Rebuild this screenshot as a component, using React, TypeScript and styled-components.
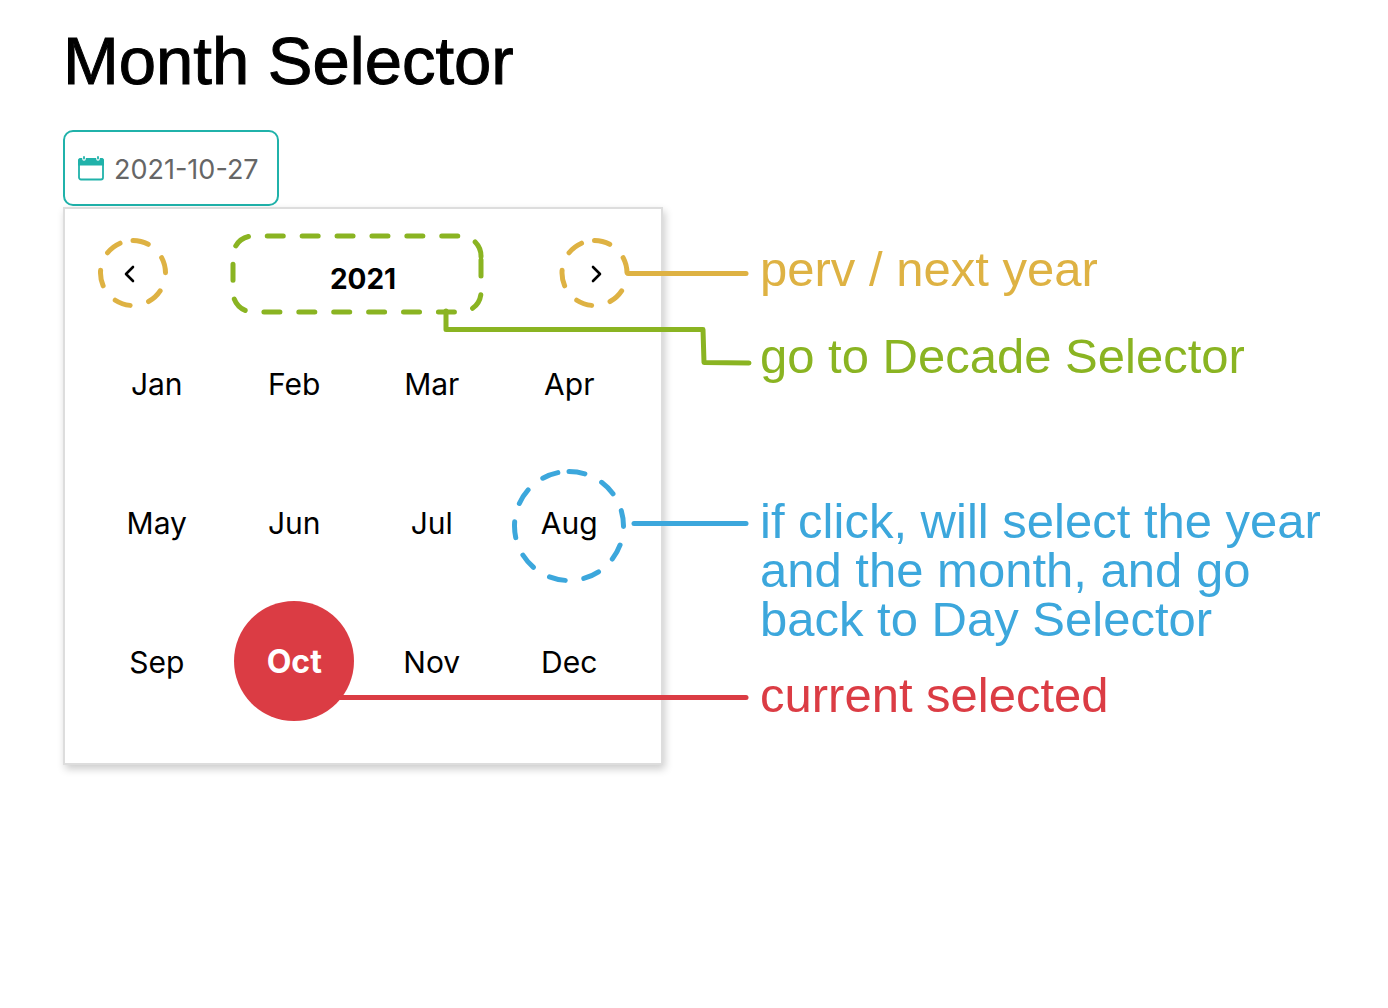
import React, { useState } from "react";
import styled, { createGlobalStyle } from "styled-components";

const colors = {
  teal: "#20b2aa",
  yellow: "#deb243",
  green: "#8ab422",
  blue: "#3ca7dc",
  red: "#db3c44",
};

const GlobalStyle = createGlobalStyle`
  *, *::before, *::after { box-sizing: border-box; }
  body { margin: 0; background: #fff; color: #000; }
  button, input { font: inherit; color: inherit; }
`;

const Page = styled.main`
  padding: 28px 62px 40px 63px;
  font-family: "Liberation Sans", Arial, sans-serif;
`;

const Title = styled.h1`
  margin: 0 0 36px;
  font-size: 67px;
  line-height: 66px;
  font-weight: 400;
  -webkit-text-stroke: 1px currentColor;
`;

const DateField = styled.label`
  display: flex;
  align-items: center;
  gap: 10px;
  width: 216px;
  height: 76px;
  margin-bottom: 1px;
  padding: 0 13px;
  border: 2px solid ${colors.teal};
  border-radius: 10px;
  color: ${colors.teal};
`;

const DateInput = styled.input`
  flex: 1;
  min-width: 0;
  padding: 4px 0 0;
  border: 0;
  outline: 0;
  background: transparent;
  color: #666;
  font-family: Inter, sans-serif;
  font-size: 27px;
  line-height: 32px;
`;

const Stage = styled.div`
  position: relative;
  display: flex;
  align-items: flex-start;
  gap: 97px;
`;

const Picker = styled.section`
  flex: 0 0 600px;
  padding: 0 23px 33px;
  border: 2px solid #ddd;
  background: #fff;
  box-shadow: 2px 4px 8px rgba(0, 0, 0, 0.2);
  font-family: Inter, sans-serif;
`;

const PickerHeader = styled.header`
  display: flex;
  align-items: center;
  height: 104px;
  padding-top: 26px;
`;

const PlainButton = styled.button`
  display: flex;
  align-items: center;
  justify-content: center;
  padding: 0;
  border: 0;
  background: transparent;
  cursor: pointer;
`;

const ArrowButton = styled(PlainButton)`
  width: 84px;
  height: 68px;
`;

const YearButton = styled(PlainButton)`
  flex: 1;
  padding-top: 10px;
  font-size: 28px;
  line-height: 36px;
  font-weight: 700;
`;

const MonthGrid = styled.div`
  display: grid;
  grid-template-columns: repeat(4, 1fr);
  grid-auto-rows: 139px;
  place-items: center;
`;

const MonthButton = styled(PlainButton)<{ $selected: boolean }>`
  width: 120px;
  height: 120px;
  padding-top: 2px;
  border-radius: 50%;
  background: ${(p) => (p.$selected ? colors.red : "transparent")};
  color: ${(p) => (p.$selected ? "#fff" : "#000")};
  font-size: ${(p) => (p.$selected ? 32 : 30)}px;
  line-height: 40px;
  font-weight: ${(p) => (p.$selected ? 700 : 400)};
`;

const Notes = styled.div`
  flex: 0 1 580px;
  min-width: 0;
  padding-top: 38px;
  font-size: 49px;
  line-height: 49px;
`;

const Note = styled.p<{ $color: string; $space?: number }>`
  margin: 0 0 ${(p) => p.$space ?? 0}px;
  color: ${(p) => p.$color};
`;

const Markup = styled.svg`
  position: absolute;
  top: 0;
  left: 0;
  pointer-events: none;
`;

const CalendarIcon = () => (
  <svg width="26" height="26" viewBox="0 0 26 26" fill="none" aria-hidden="true">
    <rect x="1" y="4" width="24" height="20.5" rx="2" stroke="currentColor" strokeWidth="1.8" />
    <path d="M0 10.500V5.500Q0 3 2.500 3H23.500Q26 3 26 5.500V10.500Z" fill="currentColor" />
    <path d="M6 2V4M20 2V4" stroke="#fff" strokeWidth="3.600" strokeLinecap="round" />
    <path d="M6 2V3.500M20 2V3.500" stroke="currentColor" strokeWidth="1.800" strokeLinecap="round" />
  </svg>
);

const Chevron = ({ points }: { points: string }) => (
  <svg width="12" height="20" viewBox="0 0 12 20" fill="none" aria-hidden="true">
    <polyline
      points={points}
      stroke="currentColor"
      strokeWidth="2.6"
      strokeLinecap="round"
      strokeLinejoin="round"
    />
  </svg>
);

/* A ring of equal dashes that closes with one shorter gap at the top. */
const DashedRing = ({ cx, cy, r, count, dash, gap }: {
  cx: number;
  cy: number;
  r: number;
  count: number;
  dash: number;
  gap: number;
}) => {
  const pattern = Array.from({ length: count }, (_, i) =>
    i < count - 1 ? [dash, gap] : [dash, 360 - count * dash - (count - 1) * gap],
  ).flat();
  return (
    <circle
      cx={cx}
      cy={cy}
      r={r}
      pathLength="360"
      strokeDasharray={pattern.join(" ")}
      transform={`rotate(-90 ${cx} ${cy})`}
    />
  );
};

const months = ["Jan", "Feb", "Mar", "Apr", "May", "Jun", "Jul", "Aug", "Sep", "Oct", "Nov", "Dec"];

export default function App() {
  const [year, setYear] = useState(2021);
  const [month, setMonth] = useState(9);
  const value = `${year}-${String(month + 1).padStart(2, "0")}-27`;

  return (
    <>
      <GlobalStyle />
      <Page>
        <Title>Month Selector</Title>
        <DateField>
          <CalendarIcon />
          <DateInput type="text" aria-label="Date" value={value} readOnly />
        </DateField>
        <Stage>
          <Picker aria-label="Month picker">
            <PickerHeader>
              <ArrowButton type="button" aria-label="Previous year" onClick={() => setYear(year - 1)}>
                <Chevron points="9,3 2,10 9,17" />
              </ArrowButton>
              <YearButton type="button">{year}</YearButton>
              <ArrowButton type="button" aria-label="Next year" onClick={() => setYear(year + 1)}>
                <Chevron points="3,3 10,10 3,17" />
              </ArrowButton>
            </PickerHeader>
            <MonthGrid>
              {months.map((name, i) => (
                <MonthButton
                  key={name}
                  type="button"
                  $selected={i === month}
                  aria-pressed={i === month}
                  onClick={() => setMonth(i)}
                >
                  {name}
                </MonthButton>
              ))}
            </MonthGrid>
          </Picker>
          <Notes>
            <Note $color={colors.yellow} $space={38}>perv / next year</Note>
            <Note $color={colors.green} $space={116}>go to Decade Selector</Note>
            <Note $color={colors.blue} $space={27}>
              if click, will select the year and the month, and go back to Day Selector
            </Note>
            <Note $color={colors.red}>current selected</Note>
          </Notes>
          <Markup
            width="700"
            height="560"
            viewBox="0 0 700 560"
            fill="none"
            strokeWidth="5"
            strokeLinecap="round"
            strokeLinejoin="round"
            aria-hidden="true"
          >
            <g stroke={colors.yellow}>
              <DashedRing cx={70} cy={66} r={32.5} count={6} dash={28} gap={33.7} />
              <DashedRing cx={531.5} cy={66} r={32.5} count={6} dash={28} gap={33.7} />
              <path d="M565 66.500H683" />
            </g>
            <g stroke={colors.green}>
              <path
                d="M418 53V85A20 20 0 0 1 398 105H190A20 20 0 0 1 170 85V49A20 20 0 0 1 190 29H398A20 20 0 0 1 418 49V53"
                strokeDasharray="16 18.9"
              />
              <path d="M383 104V122.500H640L641 155.500L686 156" />
            </g>
            <g stroke={colors.blue}>
              <DashedRing cx={506} cy={319} r={54.5} count={10} dash={17} gap={19.8} />
              <path d="M571 316.500H683" />
            </g>
            <path d="M277 490.500H683" stroke={colors.red} />
          </Markup>
        </Stage>
      </Page>
    </>
  );
}
